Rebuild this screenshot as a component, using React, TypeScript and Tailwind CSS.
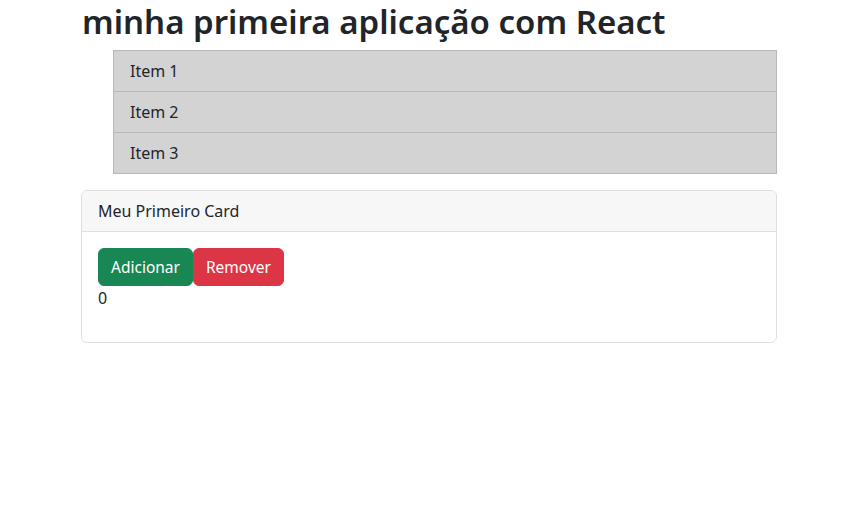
import React, { useState } from "react";

export default function App() {
  const [count, setCount] = useState(0);
  const items = ["Item 1", "Item 2", "Item 3"];
  return (
    <div
      className="min-h-[518px] bg-white text-[#212529] text-[16px] leading-[24px]"
      style={{ fontFamily: '"Segoe UI", "Noto Sans", "Open Sans", sans-serif' }}
    >
      <div className="ml-[81px] w-[696px]">
        <h1 className="m-0 mb-[6px] text-[33px] leading-[44px] font-semibold pl-px">
          minha primeira aplicação com React
        </h1>
        <ul className="pl-8 mb-4">
          {items.map((it, i) => (
            <li
              key={it}
              className={`bg-[#d3d3d3] border border-[#b9b9b9] px-4 py-2 ${i > 0 ? "border-t-0" : ""}`}
            >
              {it}
            </li>
          ))}
        </ul>
        <div className="border border-[#dfdfdf] rounded-[6px] overflow-hidden">
          <div className="bg-[#f7f7f7] border-b border-[#dfdfdf] px-4 py-2">
            Meu Primeiro Card
          </div>
          <div className="p-4">
            <div className="flex">
              <button
                onClick={() => setCount(count + 1)}
                className="bg-[#198754] border border-[#198754] text-white px-3 py-[6px] rounded-[6px] leading-[24px] text-[15.5px]"
              >
                Adicionar
              </button>
              <button
                onClick={() => setCount(count - 1)}
                className="bg-[#dc3545] border border-[#dc3545] text-white px-3 py-[6px] rounded-[6px] leading-[24px] text-[15.5px]"
              >
                Remover
              </button>
            </div>
            <p className="mb-4">{count}</p>
          </div>
        </div>
      </div>
    </div>
  );
}
